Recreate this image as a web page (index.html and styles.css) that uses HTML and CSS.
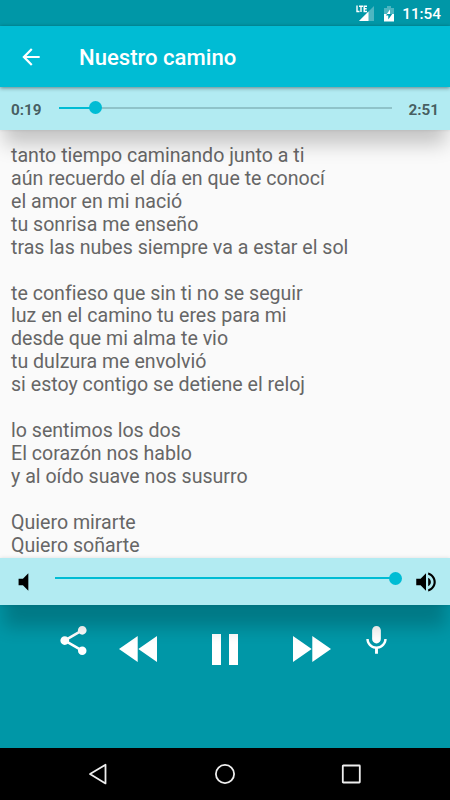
FILE: index.html
```html
<!DOCTYPE html>
<html lang="es">
<head>
<meta charset="utf-8">
<title>Nuestro camino</title>
<link rel="stylesheet" href="styles.css">
</head>
<body>
<div class="screen">
  <div class="status">
    <svg class="signal" width="20" height="18" viewBox="0 0 20 18"><path d="M19 1v15H4z" fill="#fff" opacity=".3"/><path d="M13.5 6.5V16H4z" fill="#fff"/><path d="M2 .5v6h2.5M4 1.2h4M6 1.2V7M12 1.2H9.2v5.3H12M9 3.8h2.7" fill="none" stroke="#fff" stroke-width="1.4"/></svg>
    <svg class="battery" width="10" height="16" viewBox="0 0 10 16"><path d="M0 2h3V0h4v2h3v6H0z" fill="#fff" opacity=".3"/><path d="M0 8h10v7.5H0z" fill="#fff"/><path d="M5.8 8h2.4L4.3 13.5v-4H2L3 8z" fill="#0097a7"/><path d="M6 3.5V8H2.8z" fill="#fff"/></svg>
    <span class="clock">11:54</span>
  </div>
  <header class="toolbar">
    <svg class="back" width="26" height="26" viewBox="0 0 24 24"><path fill="#fff" d="M20 11H7.83l5.59-5.59L12 4l-8 8 8 8 1.41-1.41L7.83 13H20v-2z"/></svg>
    <h1>Nuestro camino</h1>
  </header>
  <div class="progress">
    <span class="time">0:19</span>
    <div class="track"><div class="fill"></div><div class="thumb"></div></div>
    <span class="time">2:51</span>
  </div>
  <main class="lyrics">tanto tiempo caminando junto a ti
aún recuerdo el día en que te conocí
el amor en mi nació
tu sonrisa me enseño
tras las nubes siempre va a estar el sol

te confieso que sin ti no se seguir
luz en el camino tu eres para mi
desde que mi alma te vio
tu dulzura me envolvió
si estoy contigo se detiene el reloj

lo sentimos los dos
El corazón nos hablo
y al oído suave nos susurro

Quiero mirarte
Quiero soñarte</main>
  <div class="volume">
    <svg width="26" height="26" viewBox="0 0 24 24"><path d="M7 9v6h4l5 5V4l-5 5H7z"/></svg>
    <div class="track full"><div class="fill"></div><div class="thumb"></div></div>
    <svg width="26" height="26" viewBox="0 0 24 24"><path d="M3 9v6h4l5 5V4L7 9H3zm13.5 3c0-1.77-1.02-3.29-2.5-4.03v8.05c1.48-.73 2.5-2.25 2.5-4.02zM14 3.23v2.06c2.89.86 5 3.54 5 6.71s-2.11 5.85-5 6.71v2.06c4.01-.91 7-4.49 7-8.77s-2.99-7.86-7-8.77z"/></svg>
  </div>
  <div class="controls">
    <svg class="small share" width="35" height="35" viewBox="0 0 24 24"><path d="M18 16.08c-.76 0-1.44.3-1.96.77L8.91 12.7c.05-.23.09-.46.09-.7s-.04-.47-.09-.7l7.05-4.11c.54.5 1.25.81 2.04.81 1.66 0 3-1.34 3-3s-1.34-3-3-3-3 1.34-3 3c0 .24.04.47.09.7L8.04 9.81C7.5 9.31 6.79 9 6 9c-1.66 0-3 1.34-3 3s1.34 3 3 3c.79 0 1.5-.31 2.04-.81l7.12 4.16c-.05.21-.08.43-.08.65 0 1.61 1.31 2.92 2.92 2.92s2.92-1.31 2.92-2.92-1.31-2.92-2.92-2.92z"/></svg>
    <svg class="rewind" width="38" height="26" viewBox="0 0 38 26"><path d="M18.7 0v26L0 13zM38 0v26L19.3 13z"/></svg>
    <svg class="pause" width="26" height="31" viewBox="0 0 26 31"><path d="M0 0h9v31H0zM17 0h9v31h-9z"/></svg>
    <svg class="forward" width="38" height="26" viewBox="0 0 38 26"><path d="M0 0v26l18.7-13zM19.3 0v26L38 13z"/></svg>
    <svg class="small mic" width="35" height="35" viewBox="0 0 24 24"><path d="M12 14c1.66 0 2.99-1.34 2.99-3L15 5c0-1.66-1.34-3-3-3S9 3.34 9 5v6c0 1.66 1.34 3 3 3zm5.3-3c0 3-2.54 5.1-5.3 5.1S6.7 14 6.7 11H5c0 3.41 2.72 6.23 6 6.72V21h2v-3.28c3.28-.48 6-3.3 6-6.72h-1.7z"/></svg>
  </div>
  <nav class="navbar">
    <svg width="22" height="22" viewBox="0 0 22 22"><path d="M18.5 1.8v18.6L3 11.1z"/></svg>
    <svg width="22" height="22" viewBox="0 0 22 22"><circle cx="11" cy="11" r="9.1"/></svg>
    <svg width="22" height="22" viewBox="0 0 22 22"><rect x="2.8" y="2.5" width="17" height="17" rx=".5"/></svg>
  </nav>
</div>
</body>
</html>
```
FILE: styles.css
```css
* { box-sizing: border-box; }
body { margin: 0; font-family: Roboto, "Liberation Sans", sans-serif; }
.screen {
  width: 450px;
  height: 800px;
  overflow: hidden;
  display: grid;
  grid-template-rows: 26px 61px 43px 428px 47px 143px 52px;
  background: #fafafa;
}
svg { display: block; flex: none; }
.status {
  display: flex;
  align-items: center;
  justify-content: flex-end;
  padding: 2px 9px 0 0;
  background: #0097a7;
  color: #fff;
}
.signal { margin-right: 9px; }
.battery { margin-right: 8px; }
.clock { font-size: 15.3px; font-weight: 500; line-height: 24px; }
.toolbar {
  position: relative;
  z-index: 3;
  display: flex;
  align-items: center;
  padding-left: 18px;
  background: #00bcd4;
  box-shadow: 0 1px 4px rgba(0, 0, 0, .45);
}
.toolbar h1 {
  margin: 1px 0 0 35px;
  color: #fff;
  font-size: 22.1px;
  font-weight: 500;
  line-height: 28px;
}
.progress, .volume {
  position: relative;
  z-index: 2;
  display: flex;
  background: #b2ebf2;
}
.progress {
  align-items: center;
  justify-content: space-between;
  padding: 2px 11px 0;
  box-shadow: 0 18px 20px -4px rgba(0, 0, 0, .22), 0 0 3px rgba(0, 0, 0, .12);
}
.time {
  width: 31px;
  color: rgba(0, 0, 0, .62);
  font-size: 15.3px;
  font-weight: 700;
  line-height: 20px;
}
.time:last-child { position: relative; left: .5px; }
.track {
  position: relative;
  width: 333px;
  height: 2px;
  margin: -4px 0 0;
  background: #8fc3c9;
}
.fill { width: 37px; height: 2px; background: #00bcd4; }
.thumb {
  position: absolute;
  left: 30px;
  top: -5.5px;
  width: 13px;
  height: 13px;
  border-radius: 50%;
  background: #00bcd4;
}
.lyrics {
  padding: 15px 11px 0;
  color: #666;
  font-size: 19.6px;
  font-variant-ligatures: none;
  line-height: 22.92px;
  white-space: pre;
  overflow: hidden;
}
.volume {
  align-items: flex-start;
  padding: 11px 11px 0;
  box-shadow: 0 26px 18px -4px rgba(0, 0, 0, .2), 0 0 4px rgba(0, 0, 0, .12);
}
.track.full { width: 341px; margin: 8px 17px 0 18px; }
.full .fill { width: 100%; }
.full .thumb { left: 334px; }
.controls {
  display: flex;
  align-items: flex-start;
  padding: 18px 0 0 56px;
  background: #0097a7;
  fill: #fff;
}
.rewind { margin: 13px 0 0 28px; }
.pause { margin: 11px 0 0 55px; }
.forward { margin: 13px 0 0 55px; }
.mic { margin-left: 28px; }
.navbar {
  display: flex;
  justify-content: space-between;
  align-items: center;
  padding: 0 88px 0 87px;
  background: #000;
  fill: none;
  stroke: #eee;
  stroke-width: 1.8;
  stroke-linejoin: round;
}
```
